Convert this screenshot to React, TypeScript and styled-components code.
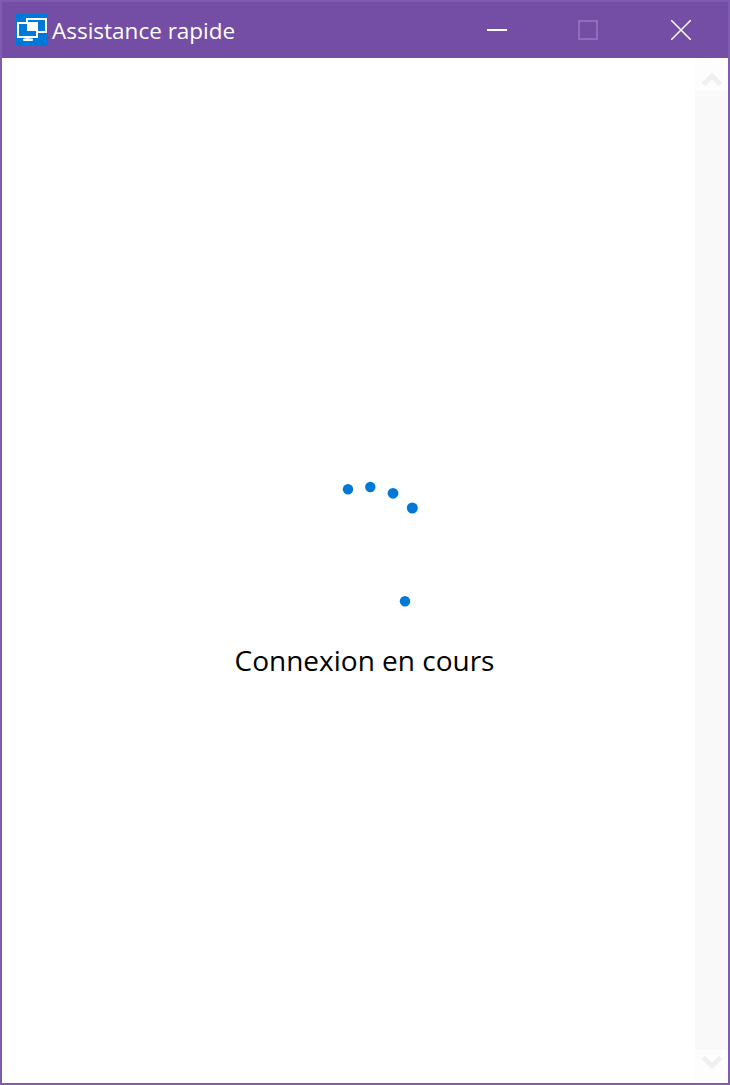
import React from "react";
import styled, { createGlobalStyle } from "styled-components";

const GlobalStyle = createGlobalStyle`
  html, body {
    margin: 0;
    padding: 0;
    background: #fff;
  }
  body {
    font-family: "Open Sans", "Noto Sans", "Liberation Sans", sans-serif;
  }
`;

const Window = styled.div`
  width: 730px;
  height: 1085px;
  box-sizing: border-box;
  display: flex;
  flex-direction: column;
  border: 2px solid #7f5cad;
  border-top: none;
  overflow: hidden;
`;

const TitleBar = styled.header`
  height: 58px;
  flex: none;
  box-sizing: border-box;
  margin: 0 -2px;
  display: flex;
  align-items: center;
  background: #744da5;
  border-top: 2px solid #7f5cad;
  padding-left: 16px;
`;

const AppIcon = styled.div`
  width: 32px;
  height: 32px;
  flex: none;
  background: #0078d7;
  display: flex;
  align-items: center;
  justify-content: center;
`;

const Title = styled.h1`
  margin: 0 0 0 4px;
  flex: 1;
  font-size: 22.5px;
  font-weight: 400;
  color: #fff;
  white-space: nowrap;
`;

const WindowButton = styled.button<{ $width: number }>`
  width: ${({ $width }) => $width}px;
  height: 56px;
  flex: none;
  padding: 0;
  background: none;
  border: none;
  display: flex;
  align-items: center;
  justify-content: center;
`;

const Body = styled.div`
  flex: 1;
  min-height: 0;
  display: flex;
`;

const Main = styled.main`
  flex: 1;
  display: flex;
  flex-direction: column;
  align-items: center;
  padding: 422px 0 0 32px;
  box-sizing: border-box;
`;

const Spinner = styled.svg`
  display: block;
  margin-left: 30px;
`;

const Status = styled.div`
  margin-top: 32px;
  font-size: 28px;
  line-height: 36px;
  color: #000;
  white-space: nowrap;
`;

const ScrollBar = styled.aside`
  width: 33px;
  flex: none;
  display: flex;
  flex-direction: column;
  background: #fdfdfd;
`;

const ScrollArrow = styled.div<{ $up?: boolean }>`
  height: 33px;
  box-sizing: border-box;
  flex: none;
  display: flex;
  align-items: center;
  justify-content: center;
  padding: ${({ $up }) => ($up ? "8px 0 0" : "0 0 8px")};
`;

const ScrollTrack = styled.div`
  flex: 1;
  background: #f9f9f9;
`;

const dots = [
  { x: 348, y: 489.3, r: 5.2 },
  { x: 370.3, y: 487, r: 5.2 },
  { x: 393, y: 493.3, r: 5.4 },
  { x: 412.3, y: 508, r: 5.5 },
  { x: 405, y: 601.3, r: 5.2 },
];

const Chevron = ({ up }: { up?: boolean }) => (
  <svg width="24" height="18" viewBox="0 0 24 18">
    <path
      d={up ? "M3.5 14.5 L12 6 L20.5 14.5" : "M3.5 3.5 L12 12 L20.5 3.5"}
      fill="none"
      stroke="#f0f0f0"
      strokeWidth="5"
    />
  </svg>
);

export default function App() {
  return (
    <>
      <GlobalStyle />
      <Window>
        <TitleBar>
          <AppIcon>
            <svg width="32" height="32" viewBox="0 0 32 32">
              <rect x="11" y="5" width="19" height="13" fill="none" stroke="#fff" strokeWidth="2" />
              <rect x="2" y="9" width="19" height="14" fill="#0078d7" stroke="#fff" strokeWidth="2" />
              <rect x="11" y="8" width="10" height="9" fill="#fff" />
              <path d="M11.5 23V25" stroke="#fff" strokeWidth="2" />
              <rect x="7" y="24.5" width="10" height="2.5" rx="1.2" fill="#fff" />
            </svg>
          </AppIcon>
          <Title>Assistance rapide</Title>
          <WindowButton $width={94}>
            <svg width="20" height="20" viewBox="0 0 20 20">
              <path d="M0 10H20" stroke="#fff" strokeWidth="2" />
            </svg>
          </WindowButton>
          <WindowButton $width={88}>
            <svg width="20" height="20" viewBox="0 0 20 20">
              <rect x="1" y="1" width="18" height="18" fill="none" stroke="#8f6fba" strokeWidth="2" />
            </svg>
          </WindowButton>
          <WindowButton $width={98}>
            <svg width="20" height="20" viewBox="0 0 20 20">
              <path d="M0 0L20 20M20 0L0 20" stroke="#fff" strokeWidth="1.5" />
            </svg>
          </WindowButton>
        </TitleBar>
        <Body>
          <Main>
            <Spinner width="90" height="130" viewBox="335 480 90 130">
              {dots.map((d) => (
                <circle key={d.y} cx={d.x} cy={d.y} r={d.r} fill="#0078d7" />
              ))}
            </Spinner>
            <Status>Connexion en cours</Status>
          </Main>
          <ScrollBar>
            <ScrollArrow $up>
              <Chevron up />
            </ScrollArrow>
            <ScrollTrack />
            <ScrollArrow>
              <Chevron />
            </ScrollArrow>
          </ScrollBar>
        </Body>
      </Window>
    </>
  );
}
